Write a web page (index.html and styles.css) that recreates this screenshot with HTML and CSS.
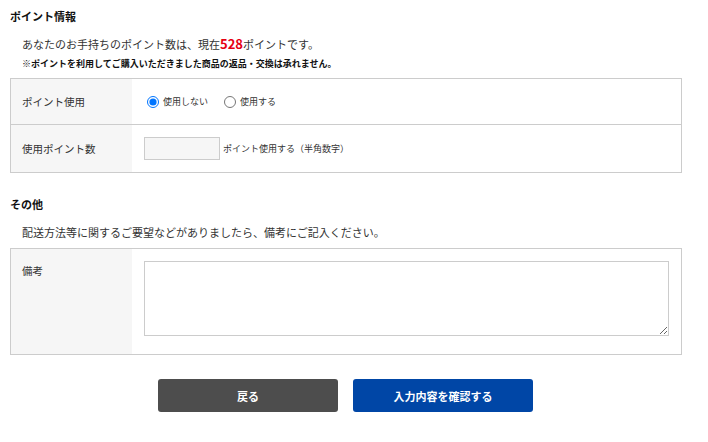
FILE: index.html
```html
<!DOCTYPE html>
<html lang="ja">
<head>
<meta charset="utf-8">
<link rel="stylesheet" href="styles.css">
</head>
<body>
<div class="wrap">
  <h2 class="sec-title">ポイント情報</h2>
  <p class="lead">あなたのお手持ちのポイント数は、現在<span class="pt">528</span>ポイントです。</p>
  <p class="note">※ポイントを利用してご購入いただきました商品の返品・交換は承れません。</p>
  <table class="form-table">
    <tr class="row-a">
      <th>ポイント使用</th>
      <td>
        <div class="radios">
          <label class="radio"><input type="radio" name="use" checked><span>使用しない</span></label>
          <label class="radio"><input type="radio" name="use"><span>使用する</span></label>
        </div>
      </td>
    </tr>
    <tr class="row-b">
      <th>使用ポイント数</th>
      <td><div class="pt-field"><input type="text" class="pt-input"><span class="hint">ポイント使用する（半角数字）</span></div></td>
    </tr>
  </table>

  <h2 class="sec-title sec-title--second">その他</h2>
  <p class="lead lead--second">配送方法等に関するご要望などがありましたら、備考にご記入ください。</p>
  <table class="form-table form-table--memo">
    <tr>
      <th>備考</th>
      <td><textarea class="memo"></textarea></td>
    </tr>
  </table>

  <div class="actions">
    <button class="btn btn--back">戻る</button>
    <button class="btn btn--next">入力内容を確認する</button>
  </div>
</div>
</body>
</html>
```
FILE: styles.css
```css
html, body {
  margin: 0;
  padding: 0;
  background: #fff;
}
body {
  font-family: "Noto Sans CJK JP", "Noto Sans", sans-serif;
  color: #333;
}
.wrap {
  width: 672px;
  margin-left: 10px;
}
.sec-title {
  margin: 8px 0 0;
  font-size: 11px;
  line-height: 16px;
  font-weight: bold;
  color: #111;
}
.sec-title--second {
  margin-top: 23px;
}
.lead {
  margin: 12px 0 0 12px;
  font-size: 11px;
  line-height: 16px;
}
.lead--second {
  margin-top: 12px;
  margin-bottom: 8px;
}
.pt {
  color: #e60012;
  font-weight: bold;
  font-size: 13px;
}
.note {
  margin: 5px 0 7px 12px;
  font-size: 9px;
  line-height: 14px;
  font-weight: bold;
  color: #111;
}
.form-table {
  width: 672px;
  border-collapse: collapse;
  border: 1px solid #ccc;
}
.form-table th,
.form-table td {
  border-top: 1px solid #ccc;
  padding: 12px;
  line-height: 21px;
  vertical-align: middle;
  text-align: left;
}
.form-table th {
  width: 98px;
  padding-left: 11px;
  background: #f6f6f6;
  font-weight: normal;
  font-size: 10.5px;
  color: #333;
}
.form-table td {
  background: #fff;
  font-size: 9px;
}
.radios {
  display: flex;
  align-items: center;
  height: 20px;
}
.radio {
  display: flex;
  align-items: center;
  margin-right: 13px;
  line-height: 14px;
}
.radio input {
  width: 12px;
  height: 12px;
  margin: 0 4px 0 3px;
}
.pt-field {
  display: flex;
  align-items: center;
  height: 23px;
}
.pt-input {
  box-sizing: border-box;
  width: 76px;
  height: 23px;
  border: 1px solid #ccc;
  background: #f6f6f6;
  margin: 0 3px 0 0;
  padding: 0 4px;
}
.form-table--memo th {
  vertical-align: top;
  padding-top: 11px;
}
.form-table--memo td {
  padding-bottom: 18px;
}
.memo {
  display: block;
  box-sizing: border-box;
  width: 100%;
  height: 75px;
  border: 1px solid #ccc;
  margin: 0;
  padding: 4px;
  font-family: inherit;
}
.actions {
  width: 671px;
  display: flex;
  justify-content: center;
  gap: 15px;
  margin-top: 24px;
}
.btn {
  width: 180px;
  height: 33px;
  border: none;
  border-radius: 3px;
  color: #fff;
  font-family: "Noto Sans CJK JP", sans-serif;
  font-size: 11px;
  font-weight: bold;
  padding: 0;
}
.btn--back {
  background: #4d4d4d;
}
.btn--next {
  background: #0046a6;
}
```
